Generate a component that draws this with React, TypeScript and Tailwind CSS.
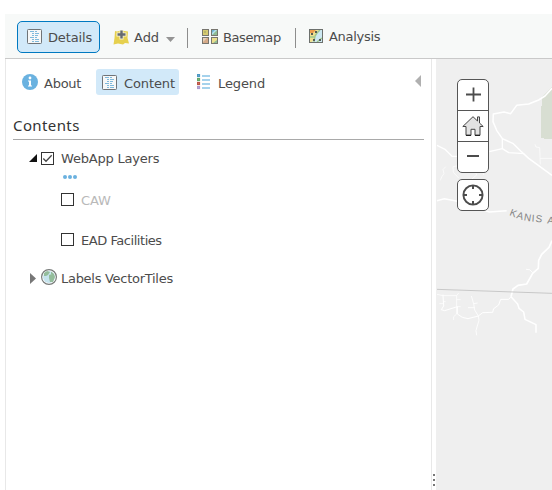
import React from "react";

type IconProps = { className?: string };

function DetailsIcon({ className }: IconProps) {
  return (
    <svg width="15" height="15" viewBox="0 0 15 15" className={className}>
      <rect x="0.5" y="0.5" width="14" height="14" rx="0.8" fill="#f7f8f8" stroke="#707478" />
      <path
        d="M3 2.5h4M8 2.5h2M5 4.5h2M8 4.5h4M5 6.5h2M8 6.5h3M3 8.5h4M8 8.5h2M5 10.5h2M8 10.5h4M5 12.5h2M8 12.5h4"
        stroke="#7fb9dc"
      />
    </svg>
  );
}

function AddIcon() {
  return (
    <svg width="17" height="15" viewBox="0 0 17 15">
      <path d="M2 1 4 1.5 8 0.5 15 1.5 14.5 8 16 13.5 12 13 10 14.5 5 13.5 0.5 14.5 1.5 8Z" fill="#e6d04e" />
      <path d="M8.5 0v9.5M3.5 4.5h10" stroke="#f5f1d5" strokeWidth="4" />
      <path d="M8.5 0.5v8M4.5 4.5h8" stroke="#666a70" strokeWidth="2.4" />
    </svg>
  );
}

function BasemapIcon() {
  return (
    <svg width="16" height="15" viewBox="0 0 16 15">
      <g stroke="#77766f" strokeWidth="1">
        <rect x="0.5" y="0.5" width="6" height="6" fill="#d6cb71" />
        <rect x="9.5" y="0.5" width="6" height="6" fill="#b9e2f2" />
        <rect x="0.5" y="8.5" width="6" height="6" fill="#d5aa88" />
        <rect x="9.5" y="8.5" width="6" height="6" fill="#ebdf8d" />
      </g>
      <path d="M10 6 15 1v5ZM11 14l4-3v3Z" fill="#8fbc94" />
      <path d="M1 9h4l-4 4Z" fill="#e6d1ba" />
      <path d="M2 2h2v2H2Z" fill="#b8b568" />
      <path d="M10 1h3l-3 3Z" fill="#6fb4ce" />
    </svg>
  );
}

function AnalysisIcon() {
  return (
    <svg width="14" height="14" viewBox="0 0 14 14">
      <path d="M0 0h14v14H0Z" fill="#cde8f2" />
      <path d="M1 1h9L7 5 6 9 3 13H1Z" fill="#efe090" />
      <path d="M1 1h6L4 4H1Z" fill="#eb9e4e" />
      <path d="M11 1 8 4 6 7 5 13M1 8h4M13 9 8 13" stroke="#9fc78d" strokeWidth="1.4" fill="none" />
      <path d="M2 4h2v2H2ZM6 2h2v2H6ZM4 10h2v2H4ZM10 10h2v2h-2Z" fill="#555b54" />
      <rect x="0.5" y="0.5" width="13" height="13" fill="none" stroke="#6c706d" />
    </svg>
  );
}

function LegendIcon() {
  return (
    <svg width="14" height="16" viewBox="0 0 14 16">
      <path d="M5 2h8M5 6h8M5 10h8M5 14h8" stroke="#4da5d9" strokeWidth="1.1" />
      <rect x="0.5" y="0.5" width="2" height="2" fill="#fff" stroke="#4b98c4" strokeWidth="1.2" />
      <rect x="0.5" y="4.5" width="2" height="2" fill="#fff" stroke="#64a869" strokeWidth="1.2" />
      <rect x="0.5" y="8.5" width="2" height="2" fill="#fff" stroke="#bd5545" strokeWidth="1.2" />
      <rect x="0.5" y="12.5" width="2" height="2" fill="#fff" stroke="#aa99cb" strokeWidth="1.2" />
    </svg>
  );
}

function InfoIcon() {
  return (
    <svg width="16" height="16" viewBox="0 0 16 16">
      <circle cx="8" cy="8" r="8" fill="#6ab2e0" />
      <circle cx="8" cy="4" r="1.4" fill="#fff" />
      <path d="M6 6.5h3v5h1v1H6v-1h1v-4H6Z" fill="#fff" />
    </svg>
  );
}

function GlobeIcon() {
  return (
    <svg width="16" height="16" viewBox="0 0 16 16">
      <circle cx="8" cy="8" r="7.4" fill="#fff" stroke="#777b79" strokeWidth="1.2" />
      <circle cx="8" cy="8" r="6" fill="#c6e4ee" />
      <path d="M3 4 6 2l3 1-2 3-2 1-2 0ZM8 6l3-1 2 0 1 3-2 5-3 0-1-4Z" fill="#94bd9b" />
      <path d="M10 2.5 13 5l-3 0Z" fill="#94bd9b" />
    </svg>
  );
}

function HomeIcon() {
  return (
    <svg width="22" height="20" viewBox="0 0 22 20">
      <path
        d="M0.8 10.5 11 0.7 15.5 5V0.9h2V7l3.7 3.5H18V19.3h-5v-6H9v6H4v-8.8Z"
        fill="#e2e2e2"
        stroke="#444"
        strokeWidth="1"
        strokeLinejoin="round"
      />
      <path d="M4 19.3h5M13 19.3h5" stroke="#222" strokeWidth="1.3" />
    </svg>
  );
}

function LocateIcon() {
  return (
    <svg width="22" height="22" viewBox="0 0 22 22">
      <circle cx="11" cy="11" r="9.6" fill="none" stroke="#4c4c4c" strokeWidth="1.9" />
      <path d="M11 1v4M11 17v4M1 11h4M17 11h4" stroke="#4c4c4c" strokeWidth="2" />
    </svg>
  );
}

function MapCanvas() {
  return (
    <svg width="116" height="431" viewBox="0 0 116 431" className="block">
      {/* park */}
      <path d="M116 28 106 38V47H105V79H108V80H116Z" fill="#d8ded2" />
      {/* northern roads */}
      <g transform="translate(-36 -9) scale(0.33333)" fill="none" stroke="#fff" strokeLinejoin="round">
        <path
          d="M456 115 435 138 416 150 386 162 350 166 332 191 312 186 280 192 279 215 290 241 307 266 340 281 362 303 386 325 412 344 456 376"
          strokeWidth="4.5"
        />
        <path d="M307 266V296L268 305M307 296 326 308 373 311M111 286 135 298 156 319H180" strokeWidth="4" />
        <path d="M405 283 408 291 419 293 421 343M421 325H456" strokeWidth="2" />
        <path
          d="M159 350 176 347 207 364 224 362 230 375 216 387M176 384 160 367 159 350M137 350 129 359 132 371 126 379 121 391M224 350 245 360 252 375"
          strokeWidth="2"
        />
        <path d="M111 452 133 446 172 454 220 470 268 486 320 482" strokeWidth="4.5" />
      </g>
      {/* southern roads */}
      <g transform="translate(-36 141) scale(0.33333)" fill="none" stroke="#fff" strokeLinejoin="round">
        <path d="M456 122 447 142 425 163 416 181 415 205 398 220 380 252 354 256 339 267 333 290" strokeWidth="5" />
        <path d="M333 290 353 312 357 325 371 336 375 358 408 374V398" strokeWidth="4.5" />
        <path d="M333 290 326 298H302L296 315 281 326 278 337 248 338 235 348 204 356 187 352 172 342V320L134 332 124 329 131 318 129 284" strokeWidth="3" />
        <path d="M111 283 129 287H170V342L161 350V360M176 279 170 287M170 299H182M170 320H182M129 305H137M118 311H131" strokeWidth="2.2" />
        <path d="M214 288 221 311 224 330 235 348 237 361 231 381 228 392 230 406M221 311 233 309M204 323H224M378 208 389 209 398 218" strokeWidth="2.5" />
        <path d="M111 268 456 280" stroke="#c8c8c8" strokeWidth="3" />
      </g>
      <path id="kanis" d="M73 156 C80 159 88 162 96 162.5 S110 164 130 167" fill="none" />
      <text className="font-['Liberation_Sans'] text-[10px]" fill="#858585" letterSpacing="1">
        <textPath href="#kanis">
          <tspan>KANIS</tspan>
          <tspan dx="1"> A</tspan>
        </textPath>
      </text>
    </svg>
  );
}

function Checkbox({ checked }: { checked?: boolean }) {
  return (
    <span className="size-[13px] shrink-0 border border-[#333] bg-white">
      {checked && (
        <svg width="11" height="11" viewBox="0 0 11 11" className="block">
          <path d="M1.3 5.5 4 8.2 9.7 2.3" fill="none" stroke="#444" strokeWidth="1.3" />
        </svg>
      )}
    </span>
  );
}

function Toolbar() {
  return (
    <div className="ml-[5px] flex h-[45px] items-start border-b border-[#c9c9c9] bg-[#f7f9f8]">
      <button className="mt-[7px] ml-3 flex h-8 w-[83px] items-center rounded-[5px] border border-[#0079c1] bg-[#d2e9f9] pl-[9px]">
        <DetailsIcon className="mb-px" />
        <span className="mt-px ml-[6px] tracking-[-0.15px]">Details</span>
      </button>
      <button className="mt-4 ml-[13px] flex h-[15px] items-center">
        <AddIcon />
        <span className="mt-px ml-1 w-[25px] tracking-[-0.1px]">Add</span>
        <svg width="9" height="5" viewBox="0 0 9 5" className="mt-[3px] ml-[7px]">
          <path d="M0 0h9L4.5 5Z" fill="#949494" />
        </svg>
      </button>
      <div className="mt-[14px] ml-[12px] h-5 w-px bg-[#8d8d8d]" />
      <button className="mt-[15px] ml-[14px] flex h-[15px] w-[80px] items-center">
        <BasemapIcon />
        <span className="mt-[3px] ml-[5px] tracking-[-0.4px]">Basemap</span>
      </button>
      <div className="mt-[14px] ml-[13px] h-5 w-px bg-[#8d8d8d]" />
      <button className="mt-[15px] ml-[13px] flex h-[14px] items-center">
        <AnalysisIcon />
        <span className="mt-[2px] ml-[6px] tracking-[-0.3px]">Analysis</span>
      </button>
    </div>
  );
}

function Tabs() {
  return (
    <div className="mt-[10px] flex h-[26px] items-center">
      <button className="ml-4 flex w-[74px] items-center">
        <InfoIcon />
        <span className="mt-[3px] ml-[6px] tracking-[-0.25px]">About</span>
      </button>
      <button className="flex h-[26px] w-[83px] items-center rounded-[3px] bg-[#d2e9f9] pl-[6px]">
        <DetailsIcon />
        <span className="mt-[3px] ml-[7px] tracking-[-0.1px]">Content</span>
      </button>
      <button className="ml-[18px] flex items-center">
        <LegendIcon />
        <span className="mt-[3px] ml-[7px] tracking-[-0.1px]">Legend</span>
      </button>
      <svg width="6" height="12" viewBox="0 0 6 12" className="mr-[10px] mb-[3px] ml-auto">
        <path d="M6 0v12L0 6Z" fill="#b0b0b0" />
      </svg>
    </div>
  );
}

function Contents() {
  return (
    <>
      <h2 className="mt-5 mr-[7px] ml-[7px] h-[25px] border-b border-[#a9a9a9] font-['Noto_Sans'] text-[15px] leading-[20px] tracking-[0.4px] text-[#333]">
        Contents
      </h2>
      <div className="mt-[10px] ml-[23px] flex h-[17px] items-center">
        <svg width="8" height="8" viewBox="0 0 8 8" className="mb-[2px]">
          <path d="M8 0v8H0Z" fill="#111" />
        </svg>
        <span className="ml-1 flex">
          <Checkbox checked />
        </span>
        <span className="ml-[7px] tracking-[-0.2px]">WebApp Layers</span>
      </div>
      <div className="mt-[8px] ml-[57px] flex h-1 gap-px">
        <span className="size-1 rounded-full bg-[#6bb1df]" />
        <span className="size-1 rounded-full bg-[#6bb1df]" />
        <span className="size-1 rounded-full bg-[#6bb1df]" />
      </div>
      <div className="mt-3 ml-[55px] flex h-[17px] items-center text-[#b9b9b9]">
        <Checkbox />
        <span className="mt-[2px] ml-[7px] tracking-[-0.1px]">CAW</span>
      </div>
      <div className="mt-[23px] ml-[55px] flex h-[17px] items-center">
        <Checkbox />
        <span className="mt-[2px] ml-[7px] tracking-[-0.45px]">EAD Facilities</span>
      </div>
      <div className="mt-[21px] ml-6 flex h-4 items-center">
        <svg width="6" height="11" viewBox="0 0 6 11" className="mt-[2px]">
          <path d="M0 0v11L6 5.5Z" fill="#777" />
        </svg>
        <span className="ml-[5px]">
          <GlobeIcon />
        </span>
        <span className="mt-[3px] ml-1 tracking-[-0.28px]">Labels VectorTiles</span>
      </div>
    </>
  );
}

function MapControls() {
  return (
    <div className="absolute top-5 left-[21px] w-8">
      <div className="divide-y divide-[#555] rounded-[5px] border border-[#555] bg-white">
        <div className="flex h-[31px] items-center justify-center">
          <svg width="15" height="15" viewBox="0 0 15 15" className="mb-px">
            <path d="M7.5 0.5v14M0 7.5h15" stroke="#4c4c4c" strokeWidth="1.8" />
          </svg>
        </div>
        <div className="flex h-[31px] items-center justify-center">
          <HomeIcon />
        </div>
        <div className="flex h-[30px] items-center justify-center">
          <svg width="12" height="2" viewBox="0 0 12 2" className="mb-[2px]">
            <path d="M0 1h12" stroke="#4c4c4c" strokeWidth="2" />
          </svg>
        </div>
      </div>
      <div className="mt-[6px] flex h-8 items-center justify-center rounded-[5px] border border-[#555] bg-white">
        <LocateIcon />
      </div>
    </div>
  );
}

export default function App() {
  return (
    <div className="h-[490px] w-[552px] overflow-hidden bg-white pt-[14px] font-['DejaVu_Sans',sans-serif] text-[13px] leading-4 whitespace-nowrap text-[#4c4c4c]">
      <Toolbar />
      <div className="flex h-[431px]">
        <div className="ml-[5px] w-[427px] border-x border-[#e8e8e8]">
          <Tabs />
          <Contents />
        </div>
        <div className="flex w-1 flex-col items-center justify-end gap-[3px] pb-1">
          <span className="size-[2px] bg-[#777]" />
          <span className="size-[2px] bg-[#777]" />
          <span className="size-[2px] bg-[#777]" />
        </div>
        <div className="relative w-[116px] bg-[#efefef]">
          <MapCanvas />
          <MapControls />
        </div>
      </div>
    </div>
  );
}
